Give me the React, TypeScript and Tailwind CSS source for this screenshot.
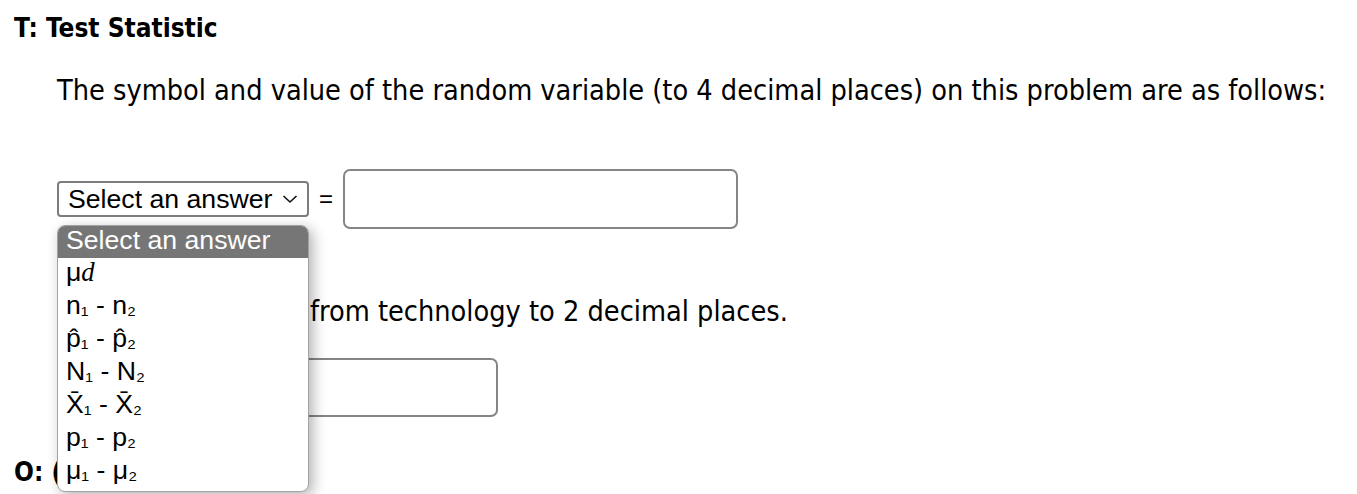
import React from "react";

const Sub = ({ children }: { children: React.ReactNode }) => (
  <span className="text-[23px]">{children}</span>
);

const options = [
  { key: "md", label: <>μ<span className="font-['Liberation_Serif'] italic">d</span></> },
  { key: "n", label: <>n<Sub>₁</Sub> - n<Sub>₂</Sub></> },
  { key: "ph", label: <>p̂<Sub>₁</Sub> - p̂<Sub>₂</Sub></> },
  { key: "N", label: <>N<Sub>₁</Sub> - N<Sub>₂</Sub></> },
  { key: "x", label: <>X̄<Sub>₁</Sub> - X̄<Sub>₂</Sub></> },
  { key: "p", label: <>p<Sub>₁</Sub> - p<Sub>₂</Sub></> },
  { key: "mu", label: <>μ<Sub>₁</Sub> - μ<Sub>₂</Sub></> },
];

const Chevron = () => (
  <svg width="16" height="10" viewBox="0 0 16 10" fill="none" className="ml-[10px]">
    <path d="M1.5 2 L8 8 L14.5 2" stroke="#111" strokeWidth="1.6" />
  </svg>
);

const App: React.FC = () => {
  return (
    <div className="relative min-h-[494px] bg-white text-black font-['DejaVu_Sans',sans-serif] [font-stretch:condensed] text-[28.6px] leading-[32px] overflow-hidden">
      <h3 className="pl-[14px] pt-[12px] font-bold text-[26px]">T: Test Statistic</h3>

      <div className="pl-[57px]">
        <p className="mt-[30px] whitespace-nowrap">
          The symbol and value of the random variable (to 4 decimal places) on this problem are as follows:
        </p>

        <div className="mt-[63px] flex items-center h-[60px]">
          <div className="flex items-center w-[252px] h-[36px] border-2 border-[#7d7d7d] rounded-[4px] pl-[9px] font-['Liberation_Sans',Arial,sans-serif] [font-stretch:normal] text-[26.67px]">
            <span>Select an answer</span>
            <Chevron />
          </div>
          <span className="mx-[10px] font-['Liberation_Sans',Arial,sans-serif] [font-stretch:normal] text-[24px]">=</span>
          <div className="w-[395px] h-[60px] border-2 border-[#858585] rounded-[7px]" />
        </div>

        <p className="mt-[66px] whitespace-nowrap">
          <span className="inline-block w-[253px] overflow-hidden align-bottom">Report the value </span>
          from technology to 2 decimal places.
        </p>

        <div className="mt-[31px] flex items-center">
          <div className="w-[400px] h-[59px] border-2 border-[#858585] rounded-[7px] ml-[41px]" />
        </div>
      </div>

      <h3 className="pl-[14px] mt-[39px] font-bold text-[26px]">O: (Outcome)</h3>

      {/* open select list */}
      <div className="absolute left-[57px] top-[225px] w-[252px] h-[267px] bg-white border border-[#a3a3a3] rounded-[8px] overflow-hidden shadow-[4px_4px_14px_rgba(0,0,0,0.3)] font-['Liberation_Sans',Arial,sans-serif] [font-stretch:normal] text-[26.67px] leading-[28px]">
        <div className="h-[32px] bg-[#767676] text-white pl-[8px]">Select an answer</div>
        {options.map((o) => (
          <div key={o.key} className="h-[33px] pl-[8px]">
            {o.label}
          </div>
        ))}
      </div>
    </div>
  );
};

export default App;
